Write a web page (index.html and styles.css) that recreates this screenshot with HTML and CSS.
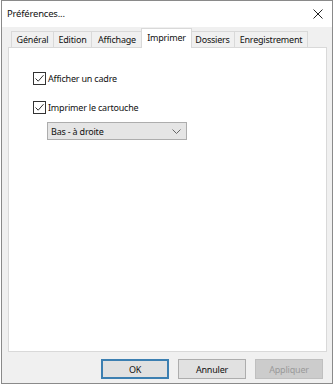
FILE: index.html
```html
<!DOCTYPE html>
<html lang="fr">
<head>
    <meta charset="UTF-8">
    <title>Préférences...</title>
    <link rel="stylesheet" href="styles.css">
</head>
<body>
    <div class="window">
        <div class="titlebar">
            <span class="title">Préférences...</span>
            <svg class="close" width="10" height="10" viewBox="0 0 10 10">
                <path d="M0.5 0.5 L9.5 9.5 M9.5 0.5 L0.5 9.5" stroke="#222" stroke-width="1" fill="none"/>
            </svg>
        </div>
        <div class="content">
            <div class="tabs">
                <div class="tab t1">Général</div>
                <div class="tab t2">Edition</div>
                <div class="tab t3">Affichage</div>
                <div class="tab t4 active">Imprimer</div>
                <div class="tab t5">Dossiers</div>
                <div class="tab t6">Enregistrement</div>
            </div>
            <div class="panel">
                <label class="check">
                    <span class="box">
                        <svg width="11" height="11" viewBox="0 0 11 11"><path d="M1.5 5.5 L4.2 8.2 L9.5 2.2" stroke="#333" stroke-width="1" fill="none"/></svg>
                    </span>
                    Afficher un cadre
                </label>
                <label class="check second">
                    <span class="box">
                        <svg width="11" height="11" viewBox="0 0 11 11"><path d="M1.5 5.5 L4.2 8.2 L9.5 2.2" stroke="#333" stroke-width="1" fill="none"/></svg>
                    </span>
                    Imprimer le cartouche
                </label>
                <div class="select">
                    <span>Bas - à droite</span>
                    <svg width="9" height="5" viewBox="0 0 9 5"><path d="M0.5 0.5 L4.5 4.5 L8.5 0.5" stroke="#666" stroke-width="1" fill="none"/></svg>
                </div>
            </div>
            <div class="buttons">
                <button class="btn default">OK</button>
                <button class="btn">Annuler</button>
                <button class="btn disabled">Appliquer</button>
            </div>
        </div>
    </div>
</body>
</html>
```

FILE: styles.css
```css
body {
    margin: 0;
    background-color: #fff;
    font-family: "Noto Sans", sans-serif;
    font-size: 9px;
    letter-spacing: -0.2px;
    color: #111;
}

.window {
    margin-left: 1px;
    width: 330px;
    height: 382px;
    border: 1px solid #8a8a8a;
    display: flex;
    flex-direction: column;
    background-color: #f0f0f0;
}

.titlebar {
    height: 26px;
    background-color: #fff;
    display: flex;
    align-items: center;
    justify-content: space-between;
    padding: 0 9px 0 5px;
}

.title {
    font-size: 9.5px;
    margin-top: -1px;
}

.content {
    flex: 1;
    display: flex;
    flex-direction: column;
    padding: 2px 5px 0 6px;
}

.tabs {
    display: flex;
    align-items: flex-end;
    height: 18px;
    padding-left: 3px;
}

.tab {
    height: 16px;
    line-height: 15px;
    text-align: center;
    border: 1px solid #d9d9d9;
    border-bottom: none;
    border-right: none;
    box-sizing: border-box;
    background-color: #f0f0f0;
}

.tab.t6 {
    border-right: 1px solid #d9d9d9;
}

.t1 { width: 42px; }
.t2 { width: 38px; }
.t3 { width: 51px; }
.t4 { width: 49px; }
.t5 { width: 43px; }
.t6 { width: 74px; }

.tab.active {
    height: 20px;
    width: 51px;
    margin: 0 -1px -1px -1px;
    background-color: #fff;
    border-right: 1px solid #d9d9d9;
    line-height: 17px;
    position: relative;
    z-index: 1;
}

.tab.active + .tab {
    border-left: none;
}

.panel {
    height: 305px;
    background-color: #fff;
    border: 1px solid #d9d9d9;
    box-sizing: border-box;
    display: flex;
    flex-direction: column;
    align-items: flex-start;
    padding: 24px 0 0 24px;
}

.check {
    display: flex;
    align-items: center;
    gap: 2px;
    height: 13px;
}

.check.second {
    margin-top: 16px;
}

.box {
    width: 11px;
    height: 11px;
    border: 1px solid #333;
    background-color: #fff;
    display: flex;
}

.select {
    margin: 8px 0 0 14px;
    width: 140px;
    height: 18px;
    box-sizing: border-box;
    border: 1px solid #adadad;
    background-color: #e5e5e5;
    display: flex;
    align-items: center;
    justify-content: space-between;
    padding: 0 5px 0 3px;
}

.buttons {
    display: flex;
    justify-content: flex-end;
    gap: 9px;
    margin-top: 7px;
    padding-right: 4px;
}

.btn {
    width: 68px;
    height: 20px;
    font-family: "Noto Sans", sans-serif;
    font-size: 9px;
    letter-spacing: -0.2px;
    color: #111;
    background-color: #e1e1e1;
    border: 1px solid #adadad;
    padding: 0;
}

.btn.default {
    border: 2px solid #3c7fb1;
}

.btn.disabled {
    background-color: #cccccc;
    border-color: #bfbfbf;
    color: #9a9a9a;
}
```
